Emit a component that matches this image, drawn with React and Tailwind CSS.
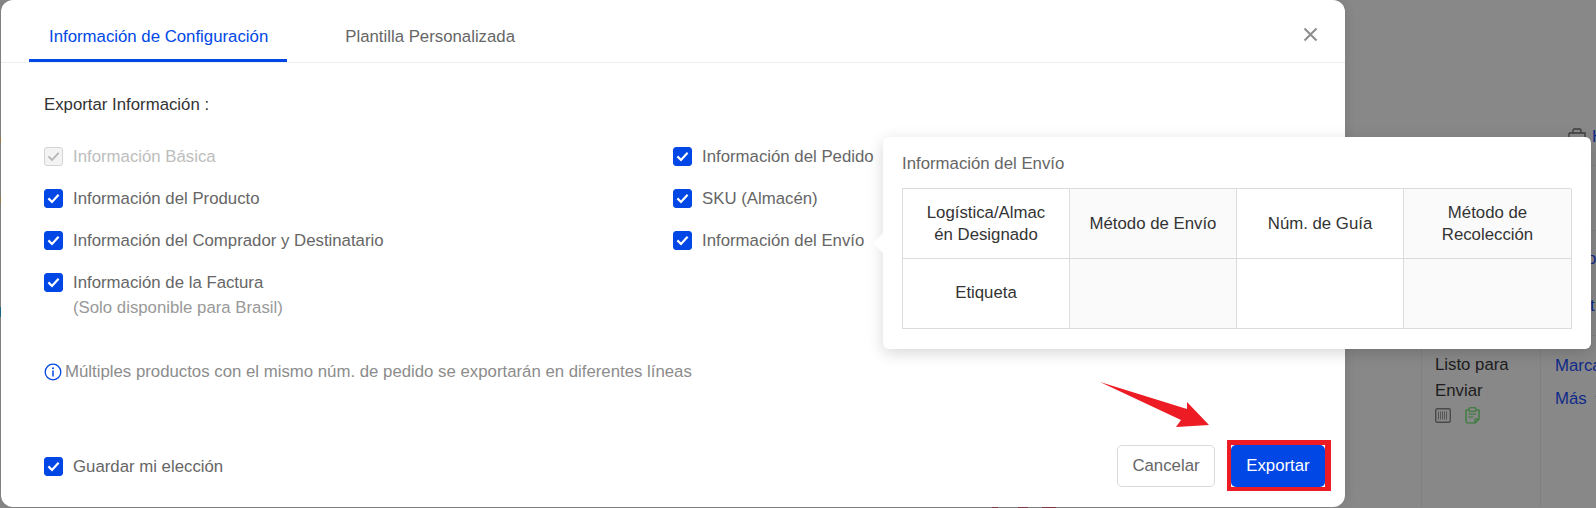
import React from 'react';

const Check = ({ disabled = false }) => (
  <span
    className={`flex h-[19px] w-[19px] shrink-0 items-center justify-center rounded-[3px] border ${
      disabled ? 'border-[#d4d4d4] bg-[#f3f3f3]' : 'border-[#0047e6] bg-[#0047e6]'
    }`}
  >
    <svg width="13" height="11" viewBox="0 0 13 11" fill="none">
      <path
        d="M1.4 5.4 L5 9 L11.6 1.8"
        stroke={disabled ? '#b5b5b5' : '#ffffff'}
        strokeWidth={disabled ? '1.8' : '2.2'}
      />
    </svg>
  </span>
);

const Option = ({ label, note, disabled = false }) => (
  <div className="flex items-start gap-[10px]">
    <Check disabled={disabled} />
    <div className={`text-[16.8px] leading-[19px] ${disabled ? 'text-[#bdbdbd]' : 'text-[#666666]'}`}>
      <p>{label}</p>
      {note && <p className="mt-[6px] text-[#999999]">{note}</p>}
    </div>
  </div>
);

const headers = ['Logística/Almacén Designado', 'Método de Envío', 'Núm. de Guía', 'Método de Recolección'];

const ShippingPopover = () => (
  <div className="absolute left-[883px] top-[137px] h-[212px] w-[708px] rounded-[6px] bg-white px-[19px] pt-[16px] shadow-[0_4px_16px_rgba(0,0,0,0.16)]">
    <span className="absolute left-[-7px] top-[99px] h-[14px] w-[14px] rotate-45 bg-white" />
    <p className="h-[35px] text-[16.8px] leading-[22px] text-[#666666]">Información del Envío</p>
    <div className="grid h-[141px] w-[669px] grid-cols-[167px_167px_167px_168px] grid-rows-[70px_70px] border-l border-t border-[#dcdcdc] text-[16.8px] leading-[22px] text-[#333333]">
      {headers.map((text, i) => (
        <div
          key={text}
          className={`flex items-center justify-center border-b border-r border-[#dcdcdc] px-[12px] text-center [overflow-wrap:anywhere] ${
            i % 2 ? 'bg-[#fafafa]' : ''
          } ${i === 0 ? 'px-[20px]' : ''} ${i === 3 ? 'px-[24px]' : ''}`}
        >
          {text}
        </div>
      ))}
      <div className="flex items-center justify-center border-b border-r border-[#dcdcdc] pb-[2px]">Etiqueta</div>
      <div className="border-b border-r border-[#dcdcdc] bg-[#fafafa]" />
      <div className="border-b border-r border-[#dcdcdc]" />
      <div className="border-b border-r border-[#dcdcdc] bg-[#fafafa]" />
    </div>
  </div>
);

// the page behind the dialog, mostly hidden by the overlay
const Backdrop = () => (
  <div className="grid h-[507px] flex-1 grid-cols-[76px_119px_1fr] overflow-hidden pt-[125px] text-[16.8px] text-[#1c1c1c]">
    <div />
    <div className="flex flex-col pt-[210px]">
      <div className="flex-1 border-l border-[#808080] pl-[13px] pt-[17px]">
        <p className="leading-[25.5px]">Listo para</p>
        <p className="leading-[25.5px]">Enviar</p>
        <div className="mt-[4px] flex items-center gap-[14px]">
          <svg width="16" height="15" viewBox="0 0 16 15" fill="none">
            <rect x="0.7" y="0.7" width="14.6" height="13.6" rx="1.5" stroke="#4a4a4a" strokeWidth="1.4" />
            <path d="M3.5 3.5V11.5M5.5 3.5V11.5M7.5 3.5V11.5M9.5 3.5V11.5M11.5 3.5V11.5" stroke="#555555" strokeWidth="1" />
          </svg>
          <svg width="15" height="17" viewBox="0 0 15 17" fill="none">
            <path d="M1 3H14V12L10 16H2.5Q1 16 1 14.5Z" stroke="#2f7a30" strokeWidth="1.2" />
            <rect x="4" y="0.8" width="7" height="3.4" rx="1" fill="#888888" stroke="#2f7a30" strokeWidth="1.1" />
            <path d="M3.5 7H11M3.5 10H8M10 16V12H14" stroke="#2f7a30" strokeWidth="1.1" />
          </svg>
        </div>
      </div>
    </div>
    <div className="flex flex-col">
      <div className="flex h-[41px] items-start border-b border-[#808080] pt-[3px] pl-[28px]">
        <svg width="18" height="14" viewBox="0 0 18 14" fill="none">
          <path d="M1 5H17V14M1 5V14M5 5V2.5Q5 1 6.5 1H11.5Q13 1 13 2.5V5" stroke="#3c3c3c" strokeWidth="1.3" />
        </svg>
        <span className="ml-[6px] leading-[17px] text-[#0f2a8a]">H</span>
      </div>
      <div className="h-[65px] border-b border-[#808080]" />
      <div className="h-[105px] border-b border-[#808080] pl-[47px] pt-[15px] leading-[25.5px] text-[#0f2a8a]">
        <p>o</p>
        <p className="mt-[21px] pl-[3px]">t</p>
      </div>
      <div className="flex-1 border-l border-[#808080] pl-[14px] pt-[17px] text-[#0f2a8a]">
        <p className="whitespace-nowrap leading-[25.5px]">Marcar</p>
        <div className="mt-[7px] flex items-center">
          <p className="leading-[25.5px]">Más</p>
          <svg className="ml-[8px]" width="10" height="7" viewBox="0 0 10 7" fill="none">
            <path d="M1 1L5 5.5L9 1" stroke="#0f2a8a" strokeWidth="1.2" />
          </svg>
        </div>
      </div>
    </div>
  </div>
);

export default function App() {
  return (
    <div
      className="relative h-[508px] w-[1596px] overflow-hidden bg-[#888888]"
      style={{ fontFamily: '"Liberation Sans", Arial, sans-serif' }}
    >
      <div className="flex">
        <div className="flex w-px shrink-0 flex-col pt-[137px]">
          <span className="h-[6px] bg-[#a08050]" />
          <span className="mt-[54px] h-[6px] bg-[#a08050]" />
          <span className="mt-[104px] h-[10px] bg-[#1f6f96]" />
        </div>
        <section className="relative flex h-[507px] w-[1344px] flex-col rounded-[12px] bg-white shadow-[0_0_12px_rgba(0,0,0,0.12)]">
          <header className="flex h-[63px] shrink-0 items-center border-b border-[#eeeeee] pl-[28px]">
            <div className="flex h-[62px] items-center border-b-[3px] border-[#0047e6] pl-[20px] pr-[19px] pt-[15px] text-[16.8px] text-[#0047e6]">
              Información de Configuración
            </div>
            <div className="ml-[38px] px-[20px] pt-[11px] text-[16.8px] text-[#666666]">Plantilla Personalizada</div>
            <svg className="ml-auto mr-[27px] mt-[6px]" width="15" height="15" viewBox="0 0 15 15" fill="none">
              <path d="M1.5 1.5L13.5 13.5M13.5 1.5L1.5 13.5" stroke="#8c8c8c" strokeWidth="2" />
            </svg>
          </header>

          <div className="flex flex-1 flex-col pl-[43px] pr-[14px]">
            <p className="mt-[32px] text-[16.8px] leading-[20px] text-[#333333]">Exportar Información :</p>

            <div className="mt-[32px] grid grid-cols-[629px_1fr]">
              <div className="flex flex-col gap-[23px]">
                <Option label="Información Básica" disabled />
                <Option label="Información del Producto" />
                <Option label="Información del Comprador y Destinatario" />
                <Option label="Información de la Factura" note="(Solo disponible para Brasil)" />
              </div>
              <div className="flex flex-col gap-[23px]">
                <Option label="Información del Pedido" />
                <Option label="SKU (Almacén)" />
                <Option label="Información del Envío" />
              </div>
            </div>

            <div className="mt-[45px] flex items-center gap-[3px] text-[16.8px] leading-[20px] text-[#8c8c8c]">
              <svg width="18" height="18" viewBox="0 0 18 18" fill="none">
                <circle cx="9" cy="9" r="7.8" stroke="#0047e6" strokeWidth="1.3" />
                <path d="M9 7.6V13.4" stroke="#0047e6" strokeWidth="1.5" />
                <circle cx="9" cy="5.2" r="1" fill="#0047e6" />
              </svg>
              <span>Múltiples productos con el mismo núm. de pedido se exportarán en diferentes líneas</span>
            </div>

            <footer className="mb-[16px] mt-auto flex items-center justify-between">
              <div className="pt-[1px]">
                <Option label="Guardar mi elección" />
              </div>
              <div className="flex items-center gap-[12px]">
                <button
                  type="button"
                  className="h-[42px] w-[98px] rounded-[5px] border border-[#d9d9d9] bg-white text-[16.8px] text-[#666666]"
                >
                  Cancelar
                </button>
                <div className="border-b-4 border-l-4 border-r-[6px] border-t-[5px] border-[#ed1c24] bg-white">
                  <button
                    type="button"
                    className="block h-[42px] w-[94px] rounded-[5px] bg-[#0047e6] text-[16.8px] text-white"
                  >
                    Exportar
                  </button>
                </div>
              </div>
            </footer>
          </div>

          <svg className="absolute left-[1095px] top-[380px]" width="115" height="50" viewBox="0 0 115 50">
            <path d="M4 2L91 29L91 22L113 45L80 47L85 40Z" fill="#ed1c24" />
          </svg>
        </section>
        <Backdrop />
      </div>
      <div className="flex h-px pl-[992px]">
        <span className="h-px w-[6px] bg-[#8a3a4a]" />
        <span className="ml-[20px] h-px w-[10px] bg-[#8a3a4a]" />
        <span className="ml-[14px] h-px w-[14px] bg-[#8a3a4a]" />
      </div>
      <ShippingPopover />
    </div>
  );
}
